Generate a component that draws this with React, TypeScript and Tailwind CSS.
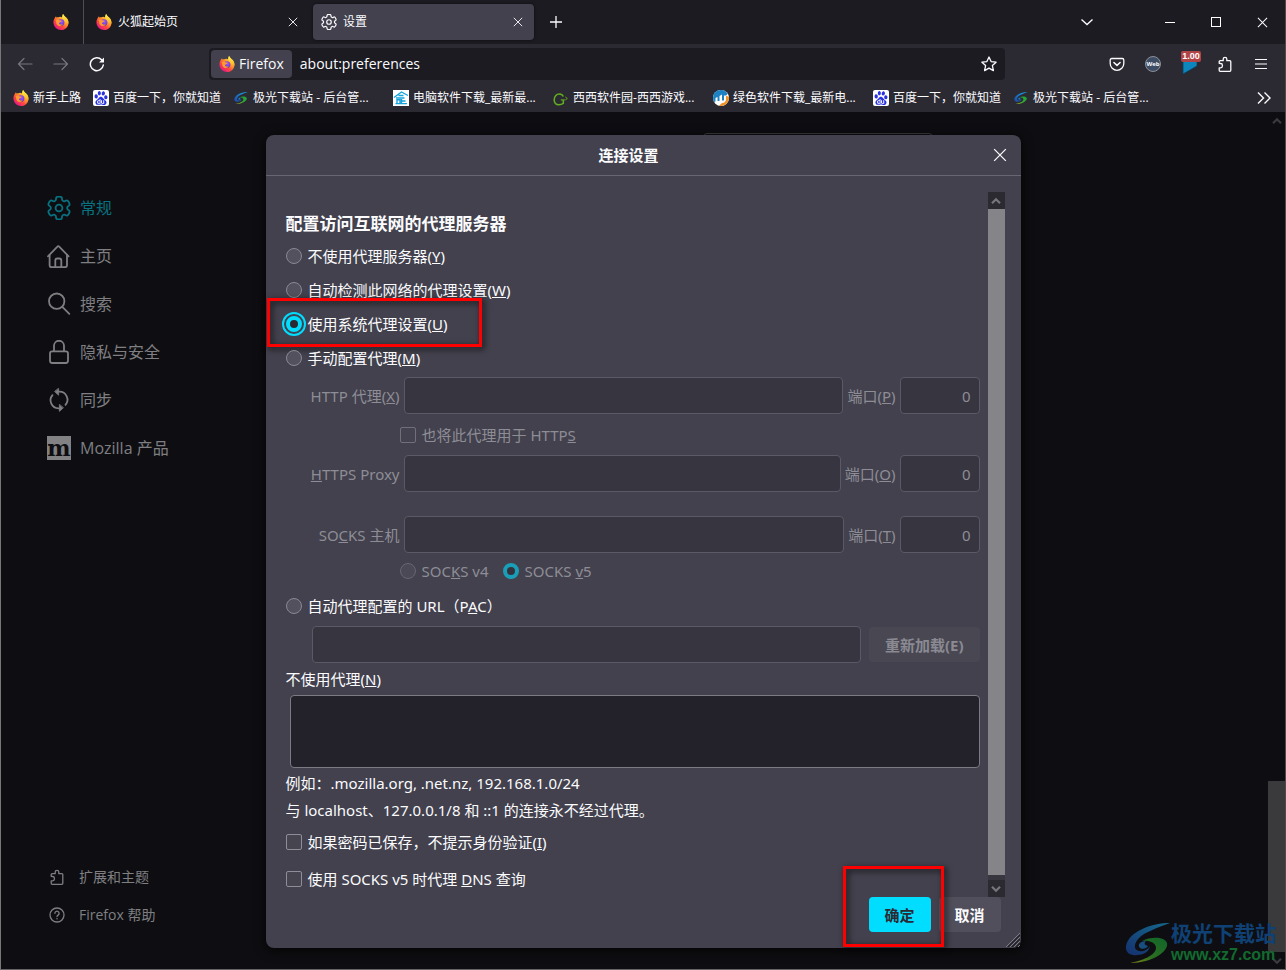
import type { ReactNode } from 'react';
import { SiBaidu } from 'react-icons/si';

/* ---------- icons ---------- */

interface IconProps {
  className?: string;
}

// six rounded teeth, smoothed through the midpoints of a polygon
const gearPath = (() => {
  const points: [number, number][] = [];
  for (let i = 0; i < 6; i++) {
    const mid = -90 + i * 60;
    const corners = [
      [8.2, -20],
      [11.8, -15],
      [11.8, 15],
      [8.2, 20],
    ];
    corners.forEach(([r, offset]) => {
      const a = ((mid + offset) * Math.PI) / 180;
      points.push([12 + r * Math.cos(a), 12 + r * Math.sin(a)]);
    });
  }
  const middle = (i: number) => {
    const p = points[i % points.length];
    const q = points[(i + 1) % points.length];
    return `${((p[0] + q[0]) / 2).toFixed(2)} ${((p[1] + q[1]) / 2).toFixed(2)}`;
  };
  const curves = points.map((_, i) => {
    const q = points[(i + 1) % points.length];
    return `Q${q[0].toFixed(2)} ${q[1].toFixed(2)} ${middle(i + 1)}`;
  });
  return `M${middle(0)}${curves.join('')}Z`;
})();

const GearIcon = ({ className }: IconProps) => (
  <svg className={className} viewBox="0 0 24 24" fill="none" stroke="currentColor" strokeWidth="1.8">
    <path d={gearPath} />
    <circle cx="12" cy="12" r="3.4" />
  </svg>
);

const HomeIcon = ({ className }: IconProps) => (
  <svg className={className} viewBox="0 0 24 24" fill="none" stroke="currentColor" strokeWidth="1.8" strokeLinecap="round" strokeLinejoin="round">
    <path d="M1 12.3 10.4 2.6a1.2 1.2 0 0 1 1.8 0L21.6 12.3" />
    <path d="M2.6 11v10.2a2 2 0 0 0 2 2H18a2 2 0 0 0 2-2V11" />
    <path d="M8.3 23v-6.5a2 2 0 0 1 2-2h2a2 2 0 0 1 2 2V23" />
  </svg>
);

const SearchIcon = ({ className }: IconProps) => (
  <svg className={className} viewBox="0 0 24 24" fill="none" stroke="currentColor" strokeWidth="1.8" strokeLinecap="round">
    <circle cx="9.7" cy="9.2" r="7.7" />
    <path d="m15.3 14.8 7 7" />
  </svg>
);

const LockIcon = ({ className }: IconProps) => (
  <svg className={className} viewBox="0 0 24 24" fill="none" stroke="currentColor" strokeWidth="1.8">
    <rect x="3" y="11.3" width="18" height="11.7" rx="2.2" />
    <path d="M7 11.3V5.8a5 5 0 0 1 10 0v5.5" />
  </svg>
);

const SyncIcon = ({ className }: IconProps) => (
  <svg className={className} viewBox="0 0 24 24" fill="none" stroke="currentColor" strokeWidth="1.8" strokeLinecap="round">
    <path d="M11.5 3.7h1a8 8 0 0 1 6 13.2" />
    <path d="M12.5 20.3h-1a8 8 0 0 1-6-13.2" />
    <path d="M11.6.6v6.600L7.800 3.700zM12.400 16.800v6.600l3.800-3.500z" fill="currentColor" strokeWidth="0.8" />
  </svg>
);

const PuzzleIcon = ({ className }: IconProps) => (
  <svg className={className} viewBox="0 0 16 16" fill="none" stroke="currentColor" strokeWidth="1.3" strokeLinejoin="round">
    <path d="M2.200 7.300V5.700a1 1 0 0 1 1-1h3V3.100a1.800 1.800 0 0 1 3.600 0v1.600h3a1 1 0 0 1 1 1v8.600a1 1 0 0 1-1 1H3.200a1 1 0 0 1-1-1v-2.500h1.500a1.700 1.700 0 0 0 1.700-1.700v-.9a1.700 1.700 0 0 0-1.700-1.700z" />
  </svg>
);

const HelpIcon = ({ className }: IconProps) => (
  <svg className={className} viewBox="0 0 16 16" fill="none" stroke="currentColor" strokeWidth="1.3" strokeLinecap="round">
    <circle cx="8" cy="8" r="7" />
    <path d="M5.9 6.300a2.100 2.100 0 1 1 3.200 1.800C8.300 8.600 8 8.900 8 9.600" />
    <path d="M8 11.700v.1" strokeWidth="1.500" />
  </svg>
);

const CloseIcon = ({ className }: IconProps) => (
  <svg className={className} viewBox="0 0 12 12" fill="none" stroke="currentColor" strokeWidth="1.1">
    <path d="m1 1 10 10M11 1 1 11" />
  </svg>
);

const ArrowIcon = ({ className }: IconProps) => (
  <svg className={className} viewBox="0 0 16 16" fill="none" stroke="currentColor" strokeWidth="1.2" strokeLinecap="round" strokeLinejoin="round">
    <path d="M15 8H1.500M7 2.500 1.500 8 7 13.500" />
  </svg>
);

const ReloadIcon = ({ className }: IconProps) => (
  <svg className={className} viewBox="0 0 16 16" fill="none" stroke="currentColor" strokeWidth="1.5" strokeLinecap="round">
    <path d="M14.300 9A6.500 6.500 0 1 1 12.600 3.700L14 5.100" />
    <path d="M15 1.400v5H10z" fill="currentColor" stroke="none" />
  </svg>
);

const ChevronIcon = ({ className }: IconProps) => (
  <svg className={className} viewBox="0 0 12 12" fill="none" stroke="currentColor" strokeWidth="1.400">
    <path d="m.5 3.500 5.500 5 5.500-5" />
  </svg>
);

const ScrollArrow = ({ className }: IconProps) => (
  <svg className={className} viewBox="0 0 10 10" fill="none" stroke="currentColor" strokeWidth="2.200">
    <path d="m1 2.800 4 4 4-4" />
  </svg>
);

const StarIcon = ({ className }: IconProps) => (
  <svg className={className} viewBox="0 0 16 16" fill="none" stroke="currentColor" strokeWidth="1.300" strokeLinejoin="round">
    <path d="m8 1 2.100 4.600 5 .6-3.700 3.400 1 5L8 12.100l-4.400 2.500 1-5L.9 6.200l5-.6z" />
  </svg>
);

const PocketIcon = ({ className }: IconProps) => (
  <svg className={className} viewBox="0 0 16 16" fill="none" stroke="currentColor" strokeWidth="1.300" strokeLinecap="round" strokeLinejoin="round">
    <path d="M2.700 2.500h10.600a1.500 1.500 0 0 1 1.500 1.500v3.500a6.800 6.800 0 0 1-13.600 0V4a1.500 1.500 0 0 1 1.500-1.500z" />
    <path d="M4.900 6.500 8 9.400l3.100-2.900" strokeWidth="1.500" />
  </svg>
);

const FirefoxIcon = ({ className }: IconProps) => (
  <svg className={className} viewBox="0 0 32 32">
    <defs>
      <linearGradient id="fx-body" x1="0.85" y1="0.1" x2="0.2" y2="0.95">
        <stop offset="0" stopColor="#fff44f" />
        <stop offset="0.35" stopColor="#ffa52a" />
        <stop offset="0.65" stopColor="#ff4a3d" />
        <stop offset="1" stopColor="#e3158a" />
      </linearGradient>
      <linearGradient id="fx-flame" x1="0.5" y1="0" x2="0.6" y2="1">
        <stop offset="0" stopColor="#fff04c" />
        <stop offset="0.6" stopColor="#ffbd2e" />
        <stop offset="1" stopColor="#ff6a35" />
      </linearGradient>
      <radialGradient id="fx-globe" cx="0.55" cy="0.35" r="0.7">
        <stop offset="0" stopColor="#a45cff" />
        <stop offset="1" stopColor="#5a33b8" />
      </radialGradient>
    </defs>
    <path d="M3.500 8c.6-1.600 1.800-3 2.700-3.600-.1 1.300.2 2 .6 2.600 1.500-.6 3-.7 4-.4 2.600-1.700 5-1.200 7.600.4 1.500-2 .4-4.700 1.700-6.800 2.200 4.500 6.300 6.300 8.700 10 3 4.800 3.200 10.600-.5 15.600C25.500 29.500 21.500 32 16.200 32 8.200 32 1.200 26.300.9 17.200.8 13.600 1.900 10.500 3.500 8z" fill="url(#fx-body)" />
    <path d="M20.100.2c2.200 4.500 6.300 6.300 8.700 10 2.400 4 2.600 8.800.7 12.300-1.500 2.800-4 3.800-5.700 4.100 2.200-3.700 2.500-8.600-.2-12.600-1.500-2.300-4-3.800-5.200-6.500-.5-2.500.4-5 1.700-7.300z" fill="url(#fx-flame)" />
    <circle cx="16" cy="17" r="6.700" fill="url(#fx-globe)" />
    <path d="M5 12c3-2 6.500-1.500 8.500.8 1.800 0 3.500.3 3.600 1-.4 1.600-2.300 1.800-3.500 2.700-.8.700-.8 1.800-1.900 2.400 1.400 2.600 5.500 2.900 8 1.100-1.700 4.400-8.500 5.600-11.700 1.300C5.900 18.900 7 15 5 12z" fill="#ff9a2e" />
  </svg>
);

const AuroraIcon = ({ className }: IconProps) => (
  <svg className={className} viewBox="0 0 46 42">
    <defs>
      <linearGradient id="au-blue" x1="1" y1="0" x2="0.2" y2="1">
        <stop offset="0" stopColor="#19a7e0" />
        <stop offset="1" stopColor="#1b4fb0" />
      </linearGradient>
      <linearGradient id="au-green" x1="1" y1="0" x2="0" y2="1">
        <stop offset="0" stopColor="#12a03c" />
        <stop offset="0.6" stopColor="#3fae2a" />
        <stop offset="1" stopColor="#d8d820" />
      </linearGradient>
    </defs>
    <path d="M45 1C27 1 4 9 1 24c-1 7 5 10 11 9 6 0 12-3 13-9-2 4-7 6-11 5-6-1-5-8 0-13C20 10 32 6 45 1z" fill="url(#au-blue)" />
    <path d="M15 26c-3-3 0-7 6-7-2 2-2 4 2 5-1 2-5 4-8 2z" fill="#1d78c8" />
    <path d="M17 19c10-5 23-4 25 2 2 8-14 20-37 20 12-2 26-8 26-15 0-6-8-8-14-7z" fill="url(#au-green)" />
  </svg>
);

const BaiduIcon = () => (
  <span className="flex size-4 items-center justify-center rounded-xs bg-white text-[#2a32e0]">
    <SiBaidu size={14} />
  </span>
);

const HouseSiteIcon = () => (
  <svg className="size-4" viewBox="0 0 16 16">
    <rect width="16" height="16" fill="#fff" />
    <path d="M1 7.500 8.500 2 15 5.500M3 8h8.500M5.500 5.500h5M4 13.500V9.800h3v3.700M8.500 13.500V9M8.500 11h4M2.500 13.600h11.500" fill="none" stroke="#17a2dc" strokeWidth="1.400" />
  </svg>
);

const SwirlSiteIcon = () => (
  <svg className="size-4" viewBox="0 0 16 16" fill="none" stroke="#62b01e">
    <path d="M10.300 6.500C9.500 4.700 8 4 6.300 4 3.300 4 1.200 6.500 1.200 9.700s2 5 4.800 5c1.600 0 3-.5 4.300-1.300V10" strokeWidth="1.500" />
    <path d="M7.800 9.900h4" strokeWidth="1.100" />
    <path d="m12.300 7 2 1.500-2 1.500" strokeWidth="0.900" />
  </svg>
);

const RoundSiteIcon = () => (
  <svg className="size-4" viewBox="0 0 16 16">
    <circle cx="8" cy="8" r="8" fill="#fff" />
    <path d="M0 8a8 8 0 0 1 14.800-4.200L13 5.500h-2v5H9v-6L6.500 6v5h-2V7l-2 1v3.500L1 12A8 8 0 0 1 0 8z" fill="#1d82c4" />
    <path d="M15.900 7A8 8 0 0 1 6 15.700L9 13c2.500 0 4-1.500 4-4V5.500z" fill="#f0912a" />
  </svg>
);

/* ---------- browser chrome ---------- */

const TabBar = () => (
  <div className="flex h-11 items-center bg-[#1c1b22] text-xs leading-[18px] text-[#fbfbfe]" role="tablist">
    <button className="flex h-11 w-[83px] items-center justify-end border-r border-[#4f4e57] pr-[14px]" role="tab" aria-label="Firefox">
      <FirefoxIcon className="size-4" />
    </button>
    <div className="flex h-9 w-[229px] items-center gap-1 pl-3 pr-[15px]" role="tab">
      <FirefoxIcon className="size-4" />
      <span className="flex-1 pl-[2px]">火狐起始页</span>
      <button aria-label="Close tab">
        <CloseIcon className="size-[10px]" />
      </button>
    </div>
    <div className="flex h-9 w-[221px] items-center gap-1 rounded-sm bg-[#42414d] pl-2 pr-[11px] shadow-[0_0_3px_rgba(0,0,0,0.6)]" role="tab" aria-selected="true">
      <GearIcon className="size-4" />
      <span className="flex-1 pl-[2px]">设置</span>
      <button aria-label="Close tab">
        <CloseIcon className="size-[10px]" />
      </button>
    </div>
    <button className="flex size-9 items-center justify-center pl-2" aria-label="New tab">
      <svg className="size-3" viewBox="0 0 12 12" stroke="currentColor" strokeWidth="1.300">
        <path d="M6 0v12M0 6h12" />
      </svg>
    </button>
    <div className="flex-1" />
    <button className="mr-[42px] flex size-9 items-center justify-center" aria-label="List tabs">
      <ChevronIcon className="size-3" />
    </button>
    <button className="flex h-11 w-[46px] items-center justify-center" aria-label="Minimize">
      <span className="h-px w-[10px] bg-white" />
    </button>
    <button className="flex h-11 w-[46px] items-center justify-center" aria-label="Maximize">
      <span className="size-[10px] border border-white" />
    </button>
    <button className="flex h-11 w-[46px] items-center justify-center" aria-label="Close window">
      <CloseIcon className="size-[11px]" />
    </button>
  </div>
);

interface ToolButtonProps {
  label: string;
  children: ReactNode;
  className?: string;
}

const ToolButton = ({ label, children, className = 'text-[#fbfbfe]' }: ToolButtonProps) => (
  <button className={`flex size-9 items-center justify-center ${className}`} aria-label={label}>
    {children}
  </button>
);

const NavBar = () => (
  <div className="flex h-10 items-center bg-[#2b2a33] pl-[6px] pr-[6px]">
    <ToolButton label="Back" className="text-[#77767d]">
      <ArrowIcon className="size-4" />
    </ToolButton>
    <ToolButton label="Forward" className="text-[#77767d]">
      <ArrowIcon className="size-4 rotate-180" />
    </ToolButton>
    <ToolButton label="Reload">
      <ReloadIcon className="size-4" />
    </ToolButton>
    <div className="mx-[94px] flex h-8 flex-1 items-center rounded-sm bg-[#1c1b22] pl-[2px] text-sm text-[#fbfbfe]">
      <button className="flex h-7 items-center gap-1 rounded-sm bg-[#42414d] px-2">
        <FirefoxIcon className="size-4" />
        Firefox
      </button>
      <input className="min-w-0 flex-1 bg-transparent px-2 outline-none" aria-label="Address" defaultValue="about:preferences" />
      <button className="flex w-8 items-center justify-center" aria-label="Bookmark this page">
        <StarIcon className="size-4" />
      </button>
    </div>
    <ToolButton label="Save to Pocket">
      <PocketIcon className="size-4" />
    </ToolButton>
    <ToolButton label="Web extension">
      <span className="flex size-4 items-center justify-center rounded-full border border-[#8b8f98] bg-[#3d4d63] text-[6px] font-bold leading-none">
        Web
      </span>
    </ToolButton>
    <ToolButton label="Speed" className="relative text-white">
      <svg className="mt-[6px] size-4" viewBox="0 0 16 16">
        <path d="M2 0v15L16 7V0z" fill="#0c86bd" stroke="#0b3f5c" strokeWidth="0.800" />
      </svg>
      <span className="absolute left-[10px] top-[5px] flex h-[11px] w-5 items-center justify-center rounded-xs bg-[#b04446] font-['Liberation_Sans',sans-serif] text-[9px] font-bold leading-[11px]">
        1.00
      </span>
    </ToolButton>
    <ToolButton label="Extensions">
      <PuzzleIcon className="size-4" />
    </ToolButton>
    <ToolButton label="Menu">
      <svg className="size-3" viewBox="0 0 12 12" stroke="currentColor" strokeWidth="1.200">
        <path d="M0 1.500h12M0 6h12M0 10.500h12" />
      </svg>
    </ToolButton>
  </div>
);

const bookmarks = [
  { label: '新手上路', icon: <FirefoxIcon className="size-4" />, cut: false },
  { label: '百度一下，你就知道', icon: <BaiduIcon />, cut: false },
  { label: '极光下载站 - 后台管...', icon: <AuroraIcon className="size-4 p-px" />, cut: true },
  { label: '电脑软件下载_最新最...', icon: <HouseSiteIcon />, cut: true },
  { label: '西西软件园-西西游戏...', icon: <SwirlSiteIcon />, cut: true },
  { label: '绿色软件下载_最新电...', icon: <RoundSiteIcon />, cut: true },
  { label: '百度一下，你就知道', icon: <BaiduIcon />, cut: false },
  { label: '极光下载站 - 后台管...', icon: <AuroraIcon className="size-4 p-px" />, cut: true },
];

const BookmarksBar = () => (
  <div className="flex h-7 items-center bg-[#2b2a33] pl-3 pr-[14px] text-xs leading-[18px] text-[#fbfbfe]">
    {bookmarks.map(({ label, icon, cut }, i) => (
      <a key={i} href="#" className={`flex shrink-0 items-center gap-1 whitespace-nowrap pr-3 ${cut ? 'w-40' : ''}`}>
        {icon}
        {label}
      </a>
    ))}
    <button className="ml-auto" aria-label="More bookmarks">
      <svg className="size-[14px]" viewBox="0 0 14 14" fill="none" stroke="currentColor" strokeWidth="1.400">
        <path d="m1 1.500 5.500 5.500L1 12.500M7.500 1.500 13 7l-5.500 5.500" />
      </svg>
    </button>
  </div>
);

/* ---------- preferences page ---------- */

const categories = [
  { label: '常规', icon: <GearIcon className="size-6" />, active: true },
  { label: '主页', icon: <HomeIcon className="size-6" /> },
  { label: '搜索', icon: <SearchIcon className="size-6" /> },
  { label: '隐私与安全', icon: <LockIcon className="size-6" /> },
  { label: '同步', icon: <SyncIcon className="size-6" /> },
  {
    label: 'Mozilla 产品',
    icon: (
      <span className="flex size-6 items-center justify-center bg-[#828284] font-['DejaVu_Serif',serif] text-[22px] font-bold leading-5 text-[#0e0e12]">
        m
      </span>
    ),
  },
];

const Sidebar = () => (
  <nav className="flex flex-col justify-between pb-[35px] pl-[46px] pt-[72px] text-[#7f7f82]">
    <ul>
      {categories.map(({ label, icon, active }) => (
        <li key={label}>
          <a href="#" className={`flex h-12 items-center gap-[9px] text-base ${active ? 'text-[#08717f]' : ''}`}>
            {icon}
            {label}
          </a>
        </li>
      ))}
    </ul>
    <ul className="text-sm">
      <li>
        <a href="#" className="flex h-[38px] items-center gap-[14px] pl-[2px]">
          <PuzzleIcon className="size-4" />
          扩展和主题
        </a>
      </li>
      <li>
        <a href="#" className="flex h-[38px] items-center gap-[14px] pl-[2px]">
          <HelpIcon className="size-4" />
          Firefox 帮助
        </a>
      </li>
    </ul>
  </nav>
);

const PageScrollbar = () => (
  <div className="flex w-[17px] flex-col items-center justify-between text-[#3b3b3e]">
    <span className="flex h-[17px] items-center">
      <ScrollArrow className="size-[10px] rotate-180" />
    </span>
    <div className="mt-auto h-[171px] w-full bg-[#3a3a3c]" />
    <span className="flex h-[17px] items-center">
      <ScrollArrow className="size-[10px]" />
    </span>
  </div>
);

/* ---------- connection dialog ---------- */

const radioClass =
  'size-4 shrink-0 appearance-none rounded-full border border-[#8a8994] bg-[#52515d] checked:border-4 checked:border-[#00ddff] checked:bg-[#2b2a33]';
const checkboxClass = 'size-4 shrink-0 appearance-none rounded-xs border border-[#8f8e98] bg-[#45444f]';
const fieldClass = 'h-[37px] rounded-sm border border-[#5a5965] bg-[#373540] px-2 text-[#8e8d96]';

interface ModeRadioProps {
  id: string;
  children: ReactNode;
  checked?: boolean;
  marked?: boolean;
}

const ModeRadio = ({ id, children, checked, marked }: ModeRadioProps) => (
  <div className="relative flex h-[34px] items-center gap-[6px]">
    <input
      type="radio"
      id={id}
      name="proxy-mode"
      defaultChecked={checked}
      className={`${radioClass} ${checked ? 'outline-2 outline-offset-2 outline-[#00ddff]' : ''}`}
    />
    <label htmlFor={id}>{children}</label>
    {marked && (
      <span className="pointer-events-none absolute -left-[19px] -top-[9px] h-[49px] w-[215px] border-3 border-[#fe0000] drop-shadow-[2px_2px_3px_rgba(0,0,0,0.8)]" />
    )}
  </div>
);

interface ProxyRowProps {
  id: string;
  label: ReactNode;
  portKey: string;
}

const ProxyRow = ({ id, label, portKey }: ProxyRowProps) => (
  <div className="flex items-center gap-1 text-[#8e8d96]">
    <label htmlFor={id} className="w-[114px] text-right">
      {label}
    </label>
    <input id={id} type="text" disabled className={`${fieldClass} min-w-0 flex-1`} />
    <label htmlFor={`${id}-port`}>
      端口(<u>{portKey}</u>)
    </label>
    <input id={`${id}-port`} type="text" inputMode="numeric" disabled defaultValue="0" className={`${fieldClass} w-20 text-right`} />
  </div>
);

const DialogScrollbar = () => (
  <div className="flex w-[17px] flex-col bg-[#38373f] text-[#77767c]">
    <span className="flex h-[17px] items-center justify-center bg-[#2b2a30]">
      <ScrollArrow className="size-[10px] rotate-180" />
    </span>
    <div className="mb-[5px] flex-1 bg-[#858489]" />
    <span className="flex h-[17px] items-center justify-center bg-[#2b2a30]">
      <ScrollArrow className="size-[10px]" />
    </span>
  </div>
);

const ConnectionDialog = () => (
  <div
    role="dialog"
    aria-labelledby="dialog-title"
    className="relative w-[755px] rounded-lg bg-[#42414d] font-['Noto_Sans','Noto_Sans_CJK_SC',sans-serif] text-[15px] leading-5 text-[#fbfbfe] shadow-[0_2px_12px_rgba(0,0,0,0.8)]"
  >
    <header className="flex h-[41px] items-center border-b border-[#686771]">
      <h2 id="dialog-title" className="flex-1 text-center font-bold">
        连接设置
      </h2>
      <button className="mr-[13px] flex size-4 items-center justify-center" aria-label="Close">
        <CloseIcon className="size-[14px]" />
      </button>
    </header>

    <div className="flex gap-2 pl-5 pr-4 pt-4">
      <form className="min-w-0 flex-1 pt-[17px]">
        <h3 className="text-[17px] font-bold leading-[30px]">配置访问互联网的代理服务器</h3>
        <ModeRadio id="mode-none">
          不使用代理服务器(<u>Y</u>)
        </ModeRadio>
        <ModeRadio id="mode-detect">
          自动检测此网络的代理设置(<u>W</u>)
        </ModeRadio>
        <ModeRadio id="mode-system" checked marked>
          使用系统代理设置(<u>U</u>)
        </ModeRadio>
        <ModeRadio id="mode-manual">
          手动配置代理(<u>M</u>)
        </ModeRadio>

        <div className="pt-[2px]">
          <ProxyRow id="http" label={<>HTTP 代理(<u>X</u>)</>} portKey="P" />
          <div className="flex h-[41px] items-center gap-[6px] pl-[114px] text-[#8e8d96]">
            <input id="share" type="checkbox" disabled className={`${checkboxClass} opacity-60`} />
            <label htmlFor="share">
              也将此代理用于 HTTP<u>S</u>
            </label>
          </div>
          <ProxyRow id="https" label={<><u>H</u>TTPS Proxy</>} portKey="O" />
          <div className="h-6" />
          <ProxyRow id="socks" label={<>SO<u>C</u>KS 主机</>} portKey="T" />
          <div className="flex h-9 items-center gap-[6px] pl-[114px] text-[#8e8d96]">
            <input id="socks4" type="radio" name="socks-version" disabled className={`${radioClass} opacity-50`} />
            <label htmlFor="socks4">
              SOC<u>K</u>S v4
            </label>
            <input id="socks5" type="radio" name="socks-version" disabled defaultChecked className={`${radioClass} ml-2 opacity-60`} />
            <label htmlFor="socks5">
              SOCKS <u>v</u>5
            </label>
          </div>
        </div>

        <ModeRadio id="mode-pac">
          自动代理配置的 URL（P<u>A</u>C）
        </ModeRadio>
        <div className="flex items-center gap-2 pl-[26px] pt-[3px]">
          <input type="text" disabled aria-label="PAC URL" className={`${fieldClass} min-w-0 flex-1`} />
          <button type="button" disabled className="h-[35px] rounded-sm bg-[#484752] px-4 font-bold text-[#8b8a92]">
            重新加载(E)
          </button>
        </div>

        <label htmlFor="no-proxy" className="flex h-8 items-center">
          <span>
            不使用代理(<u>N</u>)
          </span>
        </label>
        <div className="flex pl-1">
          <textarea id="no-proxy" className="h-[73px] flex-1 resize-none rounded-sm border border-[#7c7b83] bg-[#23222b] p-2 outline-none" />
        </div>
        <div className="pt-[2px] leading-[27px]">
          <p>例如：.mozilla.org, .net.nz, 192.168.1.0/24</p>
          <p>与 localhost、127.0.0.1/8 和 ::1 的连接永不经过代理。</p>
        </div>
        <div className="flex flex-col gap-px">
          <div className="flex h-9 items-center gap-[6px]">
            <input id="autologin" type="checkbox" className={checkboxClass} />
            <label htmlFor="autologin">
              如果密码已保存，不提示身份验证(<u>I</u>)
            </label>
          </div>
          <div className="flex h-9 items-center gap-[6px]">
            <input id="dns" type="checkbox" className={checkboxClass} />
            <label htmlFor="dns">
              使用 SOCKS v5 时代理 <u>D</u>NS 查询
            </label>
          </div>
        </div>
      </form>
      <DialogScrollbar />
    </div>

    <footer className="flex justify-end gap-2 pb-4 pr-5">
      <div className="relative z-10">
        <button className="h-[35px] w-[62px] rounded-sm bg-[#00ddff] font-bold text-[#2b2a33]">确定</button>
        <span className="pointer-events-none absolute -left-[26px] -top-[31px] h-[81px] w-[101px] border-3 border-[#fe0000] drop-shadow-[2px_2px_3px_rgba(0,0,0,0.8)]" />
      </div>
      <button className="h-[35px] w-[62px] rounded-sm bg-[#504f5b] font-bold">取消</button>
    </footer>

    <svg className="absolute bottom-px right-px size-[14px]" viewBox="0 0 14 14">
      <path d="M0 14 14 0M4 14 14 4M8 14l6-6M12 14l2-2" stroke="#7f7e85" strokeWidth="1" />
      <path d="M2 14 14 2M6 14l8-8M10 14l4-4" stroke="#222128" strokeWidth="1.200" />
    </svg>
  </div>
);

const Watermark = () => (
  <div className="pointer-events-none absolute bottom-1 right-[9px] flex items-center font-bold">
    <AuroraIcon className="w-[46px] opacity-60" />
    <div>
      <p className="text-[21px] leading-6 text-[#0f4175]">极光下载站</p>
      <p className="font-['Liberation_Sans',sans-serif] text-base leading-5 text-[#126a2e]">www.xz7.com</p>
    </div>
  </div>
);

export default function App() {
  return (
    <div className="relative flex min-h-screen flex-col border-x border-b border-l-[#77777a] border-r-[#55494c] border-b-[#66666a] bg-[#0e0e12] font-['Open_Sans','Noto_Sans_CJK_SC',sans-serif]">
      <TabBar />
      <NavBar />
      <BookmarksBar />
      {/* the page and the dialog share one grid cell */}
      <main className="grid flex-1">
        <div className="col-start-1 row-start-1 flex justify-between">
          <Sidebar />
          <PageScrollbar />
        </div>
        <div className="relative col-start-1 row-start-1 flex items-start justify-center pb-[21px] pt-[23px]">
          <div className="absolute left-[702px] top-[21px] h-8 w-[230px] rounded-sm border border-[#3c3c42]" />
          <ConnectionDialog />
        </div>
      </main>
      <Watermark />
    </div>
  );
}
